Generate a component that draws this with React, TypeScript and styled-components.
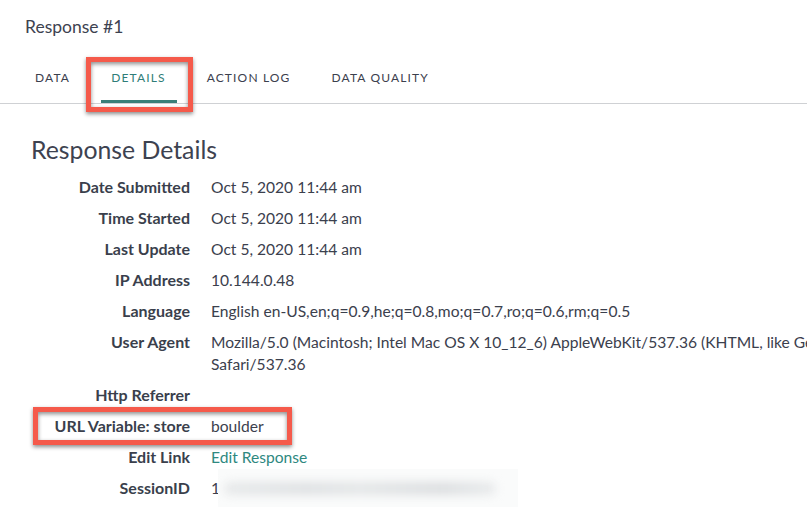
import React from 'react';
import styled, { createGlobalStyle } from 'styled-components';

const GlobalStyle = createGlobalStyle`
  html, body {
    margin: 0;
    padding: 0;
    background: #ffffff;
    overflow: hidden;
  }
  body {
    font-family: Lato, "Open Sans", sans-serif;
    color: #3b404d;
  }
`;

const Page = styled.div`
  width: 807px;
  height: 524px;
  overflow: hidden;
  background: #fff;
`;

const Header = styled.div`
  padding: 16px 25px 0;
  height: 39px;
  box-sizing: border-box;
  font-size: 17.5px;
  line-height: 22px;
  color: #3d4250;
`;

const TabBar = styled.div`
  display: flex;
  gap: 19px;
  padding: 16px 0 0 24px;
  border-bottom: 1px solid #cfd1d4;
`;

const Tab = styled.div<{ $active?: boolean }>`
  position: relative;
  padding: 0 11px 4px;
  height: 48px;
  box-sizing: border-box;
  display: flex;
  align-items: center;
  font-size: 12px;
  letter-spacing: 1.15px;
  text-transform: uppercase;
  color: ${({ $active }) => ($active ? '#2f7d78' : '#3b404d')};
  &::after {
    content: '';
    display: ${({ $active }) => ($active ? 'block' : 'none')};
    position: absolute;
    left: 1px;
    right: 0;
    bottom: 0;
    height: 3px;
    background: #3a7f79;
  }
`;

const Highlight = styled.div<{ $top: number; $right: number; $bottom: number; $left: number }>`
  position: absolute;
  top: ${({ $top }) => $top}px;
  right: ${({ $right }) => $right}px;
  bottom: ${({ $bottom }) => $bottom}px;
  left: ${({ $left }) => $left}px;
  border: 5px solid #f55a4b;
  box-shadow: 0 2px 4px rgba(0, 0, 0, 0.45), inset 0 2px 4px rgba(0, 0, 0, 0.45);
  pointer-events: none;
`;

const Content = styled.div`
  padding: 30px 0 0 31px;
`;

const Title = styled.h1`
  margin: 0 0 10px;
  font-size: 24.8px;
  font-weight: 400;
  line-height: 32px;
  color: #3d4250;
`;

const Rows = styled.div`
  display: grid;
  grid-template-columns: 159px 680px;
  column-gap: 21px;
  row-gap: 9px;
`;

const Label = styled.div`
  position: relative;
  text-align: right;
  font-size: 16px;
  font-weight: 700;
  line-height: 22px;
  color: #3a3f4c;
  white-space: nowrap;
`;

const Value = styled.div`
  font-size: 15.6px;
  line-height: 22px;
  color: #3b404d;
  min-height: 22px;
`;

const Link = styled.a`
  color: #2e8880;
  text-decoration: none;
`;

const Blurred = styled.span`
  display: inline-block;
  position: relative;
  vertical-align: top;
`;

const BlurPatch = styled.span`
  position: absolute;
  left: 7px;
  top: -8px;
  width: 300px;
  height: 38px;
  background: #fafbfb;
  overflow: hidden;
  &::before {
    content: '';
    position: absolute;
    left: 6px;
    right: 22px;
    top: 13px;
    height: 13px;
    border-radius: 6px;
    background: linear-gradient(90deg, #e7e9ea 0%, #dfe1e3 30%, #e4e6e7 50%, #dcdee0 80%, #e9ebec 100%);
    filter: blur(5px);
  }
`;

const rows: Array<{ label: string; value: React.ReactNode }> = [
  { label: 'Date Submitted', value: 'Oct 5, 2020 11:44 am' },
  { label: 'Time Started', value: 'Oct 5, 2020 11:44 am' },
  { label: 'Last Update', value: 'Oct 5, 2020 11:44 am' },
  { label: 'IP Address', value: '10.144.0.48' },
  { label: 'Language', value: 'English en-US,en;q=0.9,he;q=0.8,mo;q=0.7,ro;q=0.6,rm;q=0.5' },
  {
    label: 'User Agent',
    value: 'Mozilla/5.0 (Macintosh; Intel Mac OS X 10_12_6) AppleWebKit/537.36 (KHTML, like Gecko) Safari/537.36',
  },
  { label: 'Http Referrer', value: '' },
  { label: 'URL Variable: store', value: 'boulder' },
  { label: 'Edit Link', value: <Link href="#">Edit Response</Link> },
  {
    label: 'SessionID',
    value: (
      <Blurred>
        1<BlurPatch />
      </Blurred>
    ),
  },
];

const App: React.FC = () => (
  <Page>
    <GlobalStyle />
    <Header>Response #1</Header>
    <TabBar>
      <Tab>Data</Tab>
      <Tab $active>
        Details
        <Highlight $top={2} $right={-16} $bottom={-9} $left={-14} />
      </Tab>
      <Tab>Action Log</Tab>
      <Tab>Data Quality</Tab>
    </TabBar>
    <Content>
      <Title>Response Details</Title>
      <Rows>
        {rows.map(row => (
          <React.Fragment key={row.label}>
            <Label>
              {row.label}
              {row.label.startsWith('URL') && (
                <Highlight $top={-8} $right={-102} $bottom={-8} $left={2} />
              )}
            </Label>
            <Value>{row.value}</Value>
          </React.Fragment>
        ))}
      </Rows>
    </Content>
  </Page>
);

export default App;
